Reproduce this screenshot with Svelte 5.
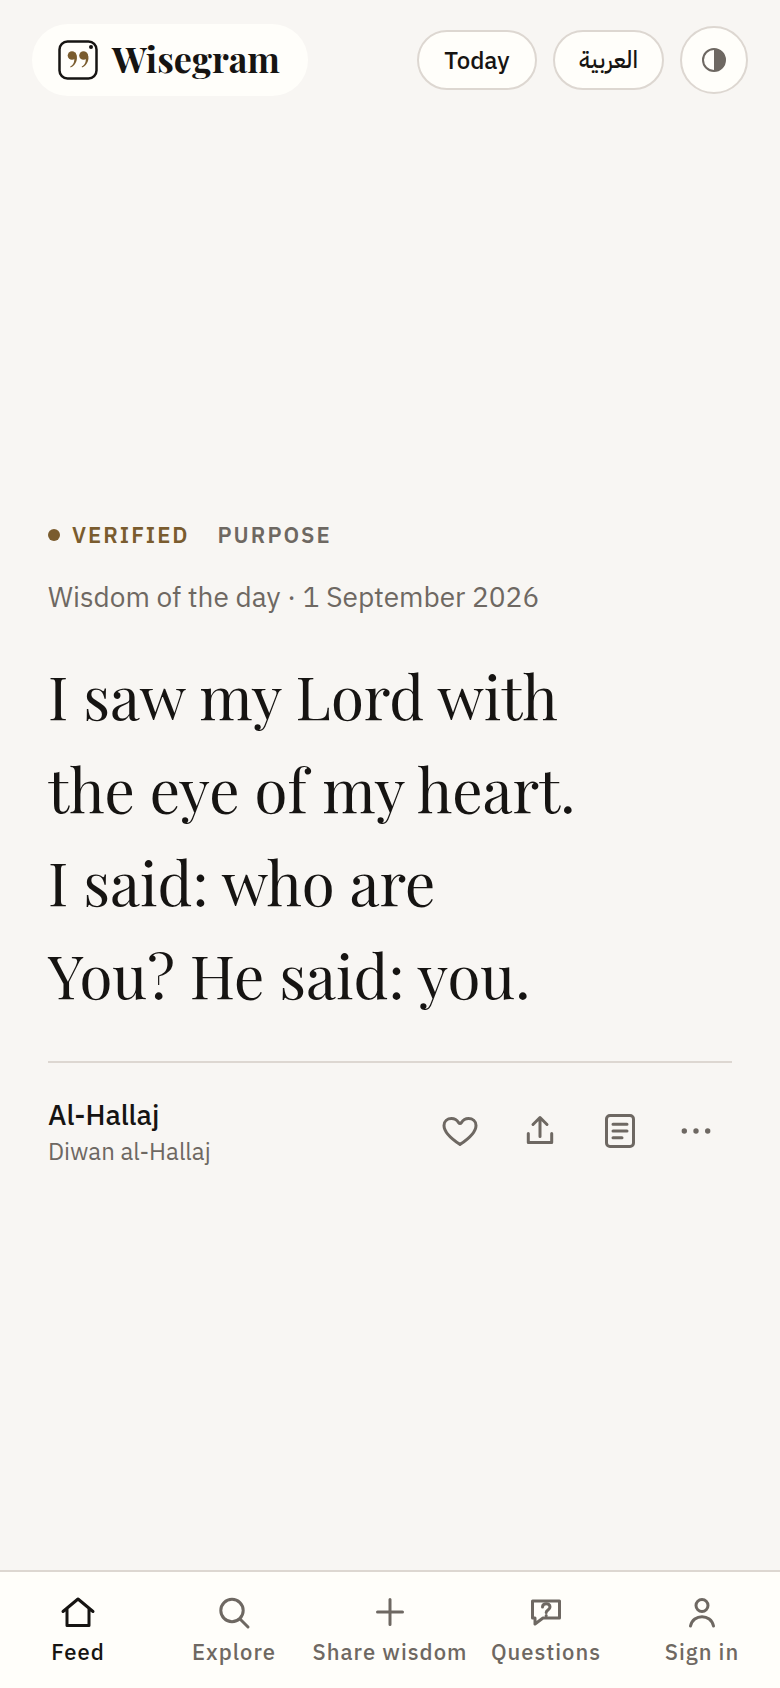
<script lang="ts">
	type NavItem = {
		id: string;
		label: string;
		href: string;
	};

	const navItems: NavItem[] = [
		{ id: 'feed', label: 'Feed', href: '/' },
		{ id: 'explore', label: 'Explore', href: '/explore' },
		{ id: 'share', label: 'Share wisdom', href: '/share' },
		{ id: 'questions', label: 'Questions', href: '/questions' },
		{ id: 'account', label: 'Sign in', href: '/sign-in' },
	];

	const quote = [
		'I saw my Lord with',
		'the eye of my heart.',
		'I said: who are',
		'You? He said: you.',
	];

	let active = $state('feed');
	let liked = $state(false);
</script>

<div class="page">
	<header class="header">
		<a class="brand" href="/">
			<svg class="brand__mark" viewBox="0 0 40 40" aria-hidden="true">
				<rect x="1.5" y="1.5" width="37" height="37" rx="8" fill="none" stroke="currentColor" stroke-width="2.5" />
				<circle cx="33" cy="7" r="2" fill="currentColor" />
				<g class="brand__quotes">
					<circle cx="14" cy="15.5" r="4.3" />
					<path d="M17.2 12.6C21 17.5 18.5 25.5 12.5 27.5L12.2 26.6C16 24.5 17.2 20.5 15.6 16Z" />
					<circle cx="25.5" cy="15.5" r="4.3" />
					<path d="M28.7 12.6C32.5 17.5 30 25.5 24 27.5L23.7 26.6C27.5 24.5 28.7 20.5 27.1 16Z" />
				</g>
			</svg>
			<span class="brand__name">Wisegram</span>
		</a>
		<div class="header__actions">
			<a class="pill" href="/today">Today</a>
			<button class="pill pill--arabic" type="button" lang="ar">العربية</button>
			<button class="pill pill--round" type="button" aria-label="Toggle theme">
				<svg class="theme" viewBox="0 0 24 24" aria-hidden="true">
					<circle cx="12" cy="12" r="11" fill="none" stroke="currentColor" stroke-width="2" />
					<path d="M12 1a11 11 0 0 1 0 22z" fill="currentColor" />
				</svg>
			</button>
		</div>
	</header>

	<main class="main">
		<article class="card">
			<div class="card__tags">
				<span class="verified">Verified</span>
				<span class="topic">Purpose</span>
			</div>
			<p class="card__date">Wisdom of the day · 1 September 2026</p>
			<blockquote class="card__quote">
				{#each quote as line}
					<span class="card__line">{line}</span>
				{/each}
			</blockquote>
			<footer class="card__footer">
				<div class="source">
					<p class="source__author">Al-Hallaj</p>
					<p class="source__book">Diwan al-Hallaj</p>
				</div>
				<div class="actions">
					<button class="action" type="button" aria-label="Like" aria-pressed={liked} onclick={() => (liked = !liked)}>
						<svg class="icon" viewBox="0 0 40 40">
							<path class:filled={liked} d="M20 33.5C15.5 30.5 4 23 4 14.5C4 10 7.5 7.5 11.5 7.5C15 7.5 17 9 18.5 11.5Q20 13.5 21.5 11.5C23 9 25 7.5 28.5 7.5C32.5 7.5 36 10 36 14.5C36 23 24.5 30.5 20 33.5Z" />
						</svg>
					</button>
					<button class="action" type="button" aria-label="Share">
						<svg class="icon" viewBox="0 0 40 40">
							<path d="M20 25.5V6.5M13 13.5l7-7 7 7M8.3 22.5v9h23.4v-9" />
						</svg>
					</button>
					<button class="action" type="button" aria-label="Open the source text">
						<svg class="icon" viewBox="0 0 40 40">
							<rect x="6.5" y="4.5" width="27" height="31" rx="3.5" />
							<path d="M13 13.3h14M13 20h14M13 26.7h9" />
						</svg>
					</button>
					<button class="action action--more" type="button" aria-label="More">
						<svg class="icon icon--dots" viewBox="0 0 40 40">
							<circle cx="8.3" cy="20" r="2.7" />
							<circle cx="20" cy="20" r="2.7" />
							<circle cx="31.7" cy="20" r="2.7" />
						</svg>
					</button>
				</div>
			</footer>
		</article>
	</main>

	<nav class="nav" aria-label="Main">
		{#each navItems as item (item.id)}
			<a
				class="nav__item"
				class:nav__item--active={active === item.id}
				href={item.href}
				aria-current={active === item.id ? 'page' : undefined}
				onclick={(event) => {
					event.preventDefault();
					active = item.id;
				}}
			>
				<svg class="icon" viewBox="0 0 40 40" aria-hidden="true">
					{#if item.id === 'feed'}
						<path d="M5 19.5L20 7l15 12.5M9 17v16.500h22V17" />
					{:else if item.id === 'explore'}
						<circle cx="18" cy="18.5" r="11.2" />
						<path d="M26 27l8 8" />
					{:else if item.id === 'share'}
						<path d="M20 7.5v25M7.5 20h25" />
					{:else if item.id === 'questions'}
						<path d="M6.5 9h27v17H17L9 32v-6H6.5z" />
						<path d="M16.5 15c0-4.500 7.500-4.500 7.500 0 0 3-3.800 2.800-3.800 5.500M20.200 23.500v.2" />
					{:else}
						<circle cx="20" cy="13.5" r="6" />
						<path d="M8.5 34c2.5-12.500 20.500-12.500 23 0" />
					{/if}
				</svg>
				<span>{item.label}</span>
			</a>
		{/each}
	</nav>
</div>

<style>
	:global(body) {
		margin: 0;
		background-color: #f8f6f3;
	}

	.page {
		--surface: #fffefa;
		--ink: #161412;
		--muted: #6e6862;
		--border: #ddd7d1;
		--accent: #7a5c2e;

		display: flex;
		flex-direction: column;
		min-height: 100vh;
		color: var(--ink);
		font-family: 'IBM Plex Sans', Roboto, 'DejaVu Sans', sans-serif;
	}

	.header {
		display: flex;
		align-items: center;
		justify-content: space-between;
		padding: 24px 32px;
	}

	.brand {
		display: flex;
		align-items: center;
		gap: 14px;
		box-sizing: border-box;
		height: 72px;
		padding: 0 28px 0 26px;
		border-radius: 36px;
		background-color: var(--surface);
		color: var(--ink);
		text-decoration: none;
	}

	.brand__mark {
		width: 40px;
		height: 40px;
	}

	.brand__quotes {
		fill: var(--accent);
	}

	.brand__name {
		padding-bottom: 4px;
		font-family: 'Playfair Display', 'Liberation Serif', serif;
		font-size: 36px;
		line-height: 48px;
		font-weight: 700;
	}

	.header__actions {
		display: flex;
		align-items: center;
		gap: 16px;
	}

	.pill {
		display: flex;
		align-items: center;
		justify-content: center;
		box-sizing: border-box;
		height: 60px;
		min-width: 120px;
		padding: 0 24px;
		border: 2px solid var(--border);
		border-radius: 34px;
		background-color: var(--surface);
		color: var(--ink);
		font-family: inherit;
		font-size: 24px;
		font-weight: 500;
		text-decoration: none;
		cursor: pointer;
	}

	.pill--arabic {
		min-width: 110px;
		font-family: 'IBM Plex Sans Arabic', 'Noto Sans Arabic', 'DejaVu Sans', sans-serif;
	}

	.pill--round {
		width: 68px;
		min-width: 68px;
		height: 68px;
		padding: 0;
		color: var(--muted);
	}

	.theme {
		width: 24px;
		height: 24px;
	}

	.main {
		display: flex;
		flex: 1;
		flex-direction: column;
		justify-content: center;
		padding: 0 48px;
	}

	.card__tags {
		display: flex;
		align-items: center;
		gap: 28px;
		color: var(--muted);
		font-size: 22px;
		line-height: 32px;
		font-weight: 600;
		letter-spacing: 2px;
		text-transform: uppercase;
	}

	.verified {
		display: flex;
		align-items: center;
		gap: 12px;
		color: var(--accent);
	}

	.verified::before {
		width: 12px;
		height: 12px;
		border-radius: 50%;
		background-color: currentColor;
		content: '';
	}

	.card__date {
		margin: 24px 0 0;
		color: var(--muted);
		font-size: 28px;
		line-height: 44px;
	}

	.card__quote {
		margin: 30px 0 0;
		font-family: 'Playfair Display', 'Liberation Serif', serif;
		font-size: 60px;
		line-height: 93px;
	}

	.card__line {
		display: block;
	}

	.card__footer {
		display: flex;
		align-items: center;
		justify-content: space-between;
		margin-top: 40px;
		padding-top: 28px;
		border-top: 2px solid var(--border);
	}

	.source__author,
	.source__book {
		margin: 0;
	}

	.source__author {
		font-size: 28px;
		line-height: 40px;
		font-weight: 500;
	}

	.source__book {
		color: var(--muted);
		font-size: 24px;
		line-height: 32px;
	}

	.actions {
		display: flex;
	}

	.action {
		display: flex;
		align-items: center;
		justify-content: center;
		width: 80px;
		height: 80px;
		padding: 0;
		border: 0;
		background: none;
		color: var(--muted);
		cursor: pointer;
	}

	.action--more {
		width: 72px;
	}

	.icon {
		width: 40px;
		height: 40px;
		fill: none;
		stroke: currentColor;
		stroke-width: 3;
		stroke-linecap: round;
		stroke-linejoin: round;
	}

	.icon--dots {
		fill: currentColor;
		stroke: none;
	}

	.filled {
		fill: currentColor;
	}

	.nav {
		display: grid;
		grid-template-columns: repeat(5, 1fr);
		border-top: 2px solid var(--border);
		background-color: var(--surface);
	}

	.nav__item {
		display: flex;
		flex-direction: column;
		align-items: center;
		gap: 6px;
		padding: 20px 0 22px;
		color: var(--muted);
		font-size: 22px;
		line-height: 28px;
		font-weight: 500;
		letter-spacing: 1px;
		text-decoration: none;
		white-space: nowrap;
	}

	.nav__item--active {
		color: var(--ink);
	}
</style>
